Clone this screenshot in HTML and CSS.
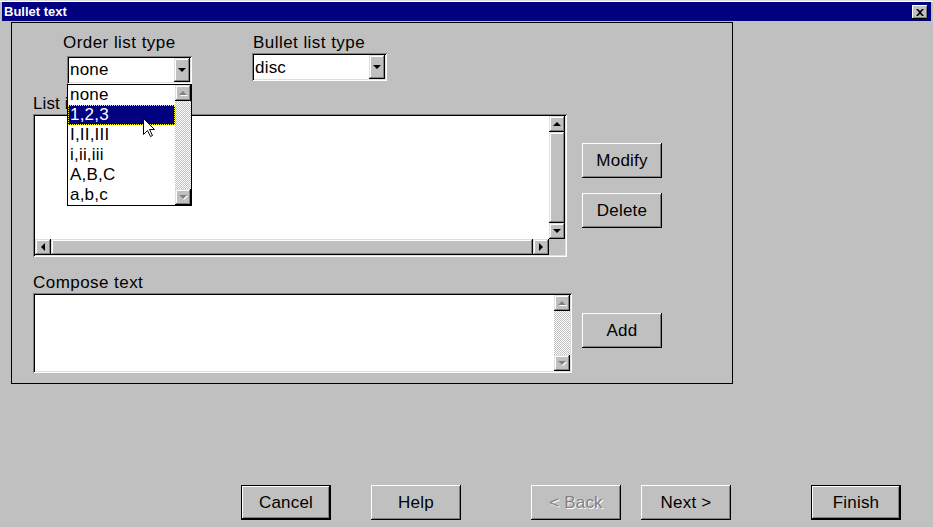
FILE: index.html
```html
<!DOCTYPE html>
<html lang="en">
<head>
    <meta charset="UTF-8">
    <title>Bullet text</title>
    <link rel="stylesheet" href="styles.css">
</head>
<body>
    <div class="window">
        <div class="titlebar">
            <span class="title">Bullet text</span>
            <button class="close-btn">
                <svg width="8" height="7" viewBox="0 0 8 7"><path d="M0 0h2l2 2 2-2h2L5 3.5 8 7H6L4 5 2 7H0l3-3.5z" fill="#000"/></svg>
            </button>
        </div>

        <div class="group">
            <div class="type-row">
                <div class="field order-field">
                    <div class="label">Order list type</div>
                    <div class="select sunken order-select">
                        <span class="select-value">none</span>
                        <span class="drop-btn raised"><i class="arrow down"></i></span>
                    </div>
                    <div class="drop-list">
                        <ul class="options">
                            <li>none</li>
                            <li class="selected">1,2,3</li>
                            <li>I,II,III</li>
                            <li>i,ii,iii</li>
                            <li>A,B,C</li>
                            <li>a,b,c</li>
                        </ul>
                        <div class="vscroll disabled">
                            <span class="sb-btn raised"><i class="arrow up"></i></span>
                            <span class="track dither"></span>
                            <span class="sb-btn raised"><i class="arrow down"></i></span>
                        </div>
                    </div>
                    <svg class="cursor" width="12" height="19" viewBox="0 0 12 19">
                        <path d="M0.5 0.5V16.5L4.5 12.5L7.5 18.5L9.5 17.5L6.5 11.5H11.5Z" fill="#fff" stroke="#000"/>
                    </svg>
                </div>
                <div class="field bullet-field">
                    <div class="label">Bullet list type</div>
                    <div class="select sunken bullet-select">
                        <span class="select-value">disc</span>
                        <span class="drop-btn raised"><i class="arrow down"></i></span>
                    </div>
                </div>
            </div>

            <div class="label list-label">List items</div>
            <div class="box-row">
                <div class="list-box sunken">
                    <div class="content"></div>
                    <div class="vscroll">
                        <span class="sb-btn raised"><i class="arrow up"></i></span>
                        <span class="thumb raised"></span>
                        <span class="sb-btn raised"><i class="arrow down"></i></span>
                    </div>
                    <div class="hscroll">
                        <span class="sb-btn raised"><i class="arrow left"></i></span>
                        <span class="thumb raised"></span>
                        <span class="sb-btn raised"><i class="arrow right"></i></span>
                    </div>
                    <div class="corner"></div>
                </div>
                <div class="side-buttons">
                    <button class="btn modify-btn">Modify</button>
                    <button class="btn delete-btn">Delete</button>
                </div>
            </div>

            <div class="label compose-label">Compose text</div>
            <div class="box-row">
                <div class="compose-box sunken">
                    <div class="content"></div>
                    <div class="vscroll disabled">
                        <span class="sb-btn raised"><i class="arrow up"></i></span>
                        <span class="track dither"></span>
                        <span class="sb-btn raised"><i class="arrow down"></i></span>
                    </div>
                </div>
                <button class="btn add-btn">Add</button>
            </div>
        </div>

        <div class="wizard-buttons">
            <button class="btn wide default cancel-btn">Cancel</button>
            <button class="btn wide help-btn">Help</button>
            <button class="btn wide back-btn" disabled>&lt; Back</button>
            <button class="btn wide next-btn">Next &gt;</button>
            <button class="btn wide default finish-btn">Finish</button>
        </div>
    </div>
</body>
</html>
```

FILE: styles.css
```css
*{
    margin: 0;
    padding: 0;
    box-sizing: border-box;
}
body {
    width: 933px;
    height: 527px;
    overflow: hidden;
    background-color: #c0c0c0;
    font-family: "Liberation Sans", Arial, sans-serif;
    font-size: 17px;
    letter-spacing: 0.2px;
    color: #000;
}
.window {
    height: 527px;
    padding: 2px 2px 0;
    box-shadow: inset 0 1px #dfdfdf, inset 0 2px #fff;
}

/* title bar */
.titlebar {
    display: flex;
    justify-content: space-between;
    align-items: flex-start;
    height: 19px;
    background-color: #000080;
}
.title {
    padding-left: 2px;
    color: #fff;
    font-size: 13px;
    font-weight: bold;
    line-height: 19px;
    letter-spacing: 0;
}
.close-btn {
    display: flex;
    align-items: center;
    justify-content: center;
    width: 16px;
    height: 14px;
    margin: 3px 3px 0 0;
    border: none;
    background-color: #c0c0c0;
    box-shadow: inset -1px -1px #000, inset 1px 1px #fff, inset -2px -2px #808080;
}

/* bevels */
.sunken {
    padding: 2px;
    background-color: #fff;
    box-shadow: inset 1px 1px #808080, inset -1px -1px #fff, inset 2px 2px #000, inset -2px -2px #dfdfdf;
}
.raised {
    display: flex;
    align-items: center;
    justify-content: center;
    background-color: #c0c0c0;
    box-shadow: inset -1px -1px #000, inset 1px 1px #dfdfdf, inset -2px -2px #808080, inset 2px 2px #fff;
}
.dither {
    background: repeating-conic-gradient(#c0c0c0 0 25%, #fff 0 50%) 0 0 / 2px 2px;
}

/* arrows */
.arrow {
    display: block;
    width: 0;
    height: 0;
    border: 4px solid transparent;
}
.arrow.up {
    border-top-width: 0;
    border-bottom-color: #000;
}
.arrow.down {
    border-bottom-width: 0;
    border-top-color: #000;
}
.arrow.left {
    border-left-width: 0;
    border-right-color: #000;
}
.arrow.right {
    border-right-width: 0;
    border-left-color: #000;
}
.disabled .arrow.up {
    border-bottom-color: #808080;
    filter: drop-shadow(1px 1px 0 #fff);
}
.disabled .arrow.down {
    border-top-color: #808080;
    filter: drop-shadow(1px 1px 0 #fff);
}

/* group box */
.group {
    width: 722px;
    height: 362px;
    margin: 1px 0 0 9px;
    padding: 10px 0 0 21px;
    border: 1px solid #000;
}
.label {
    line-height: 20px;
    letter-spacing: 0.45px;
    white-space: nowrap;
}
.type-row {
    display: flex;
    align-items: flex-start;
}
.field {
    position: relative;
}
.order-field {
    margin-left: 30px;
}
.bullet-field {
    margin-left: 60px;
}
.bullet-field .label {
    padding-left: 1px;
}
.select {
    display: flex;
    height: 28px;
}
.order-select {
    width: 125px;
    margin: 3px 0 0 4px;
}
.bullet-select {
    width: 135px;
}
.select-value {
    flex: 1;
    padding-left: 1px;
    line-height: 24px;
}
.bullet-select .select-value {
    padding-top: 1px;
}
.drop-btn {
    width: 16px;
}

/* open dropdown */
.drop-list {
    position: absolute;
    top: 51px;
    left: 4px;
    display: flex;
    width: 125px;
    height: 122px;
    border: 1px solid #000;
    background-color: #fff;
}
.options {
    flex: 1;
    list-style: none;
}
.options li {
    height: 20px;
    padding-left: 2px;
    line-height: 20px;
}
.options .selected {
    background-color: #000080;
    color: #fff;
    outline: 1px dotted #ffff00;
    outline-offset: -1px;
}
.cursor {
    position: absolute;
    top: 85px;
    left: 80px;
}

/* scrollbars */
.vscroll {
    display: flex;
    flex-direction: column;
    width: 16px;
}
.hscroll {
    display: flex;
}
.sb-btn {
    width: 16px;
    height: 16px;
    flex: none;
}
.track, .thumb {
    flex: 1;
}
.corner {
    background-color: #c0c0c0;
}

/* boxes */
.list-label {
    margin-top: 10px;
    letter-spacing: 0.1px;
}
.compose-label {
    margin-top: 16px;
}
.box-row {
    display: flex;
    align-items: flex-start;
}
.list-box {
    display: grid;
    grid-template-columns: 1fr 16px;
    grid-template-rows: 1fr 16px;
    width: 534px;
    height: 143px;
}
.compose-box {
    display: grid;
    grid-template-columns: 1fr 16px;
    width: 539px;
    height: 80px;
}
.side-buttons {
    display: flex;
    flex-direction: column;
    gap: 15px;
    margin: 29px 0 0 15px;
}
.add-btn {
    margin: 20px 0 0 10px;
}

/* buttons */
.btn {
    width: 80px;
    height: 35px;
    border: none;
    background-color: #c0c0c0;
    font-family: inherit;
    font-size: 17px;
    letter-spacing: 0.2px;
    color: #000;
    box-shadow: inset -1px -1px #000, inset 1px 1px #fff, inset -2px -2px #808080;
}
.btn.wide {
    width: 90px;
}
.btn.default {
    box-shadow: inset 0 0 0 1px #000, inset -2px -2px #000, inset 2px 2px #fff, inset -3px -3px #808080;
}
.btn:disabled {
    color: #808080;
    text-shadow: 1px 1px #fff;
}
.wizard-buttons {
    display: flex;
    margin-top: 101px;
}
.cancel-btn {
    margin-left: 239px;
}
.help-btn {
    margin-left: 40px;
}
.back-btn {
    margin-left: 70px;
}
.next-btn {
    margin-left: 20px;
}
.finish-btn {
    margin-left: 80px;
}
```
